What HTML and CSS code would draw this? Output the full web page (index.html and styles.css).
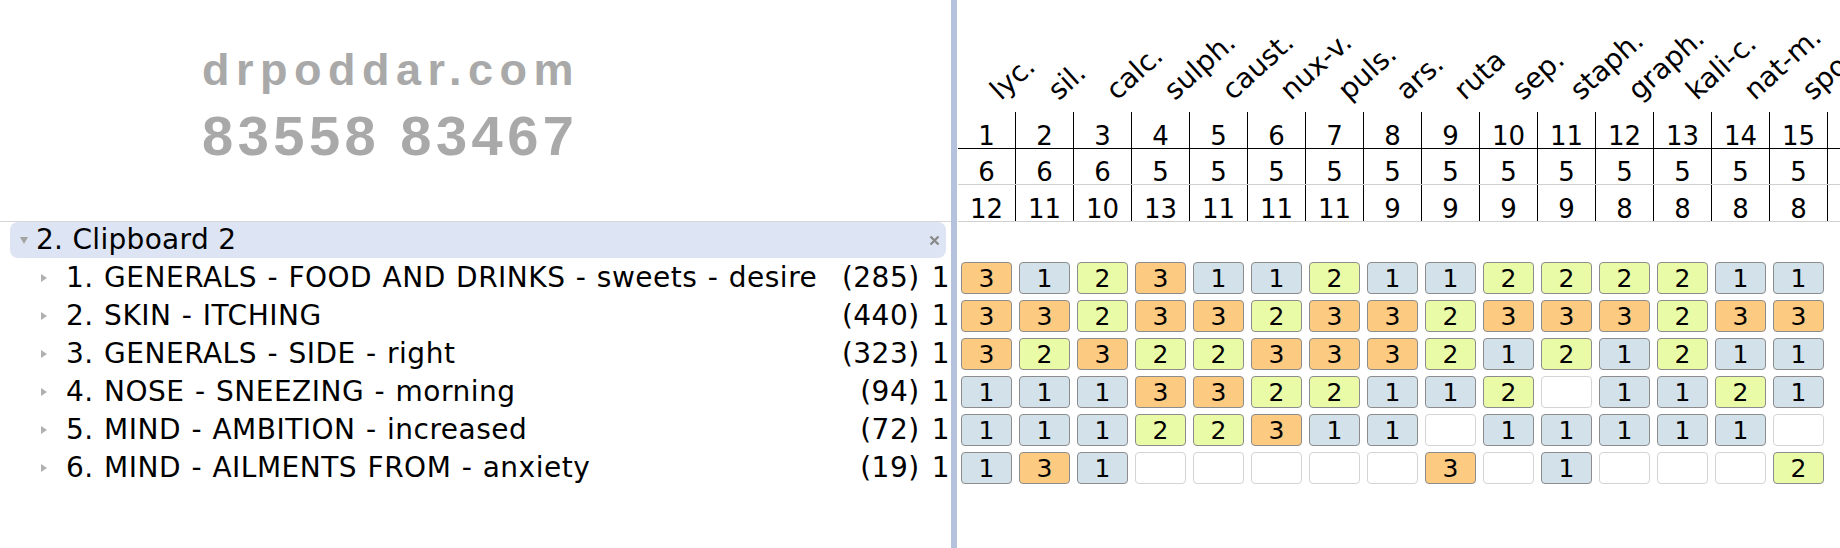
FILE: index.html
```html
<!DOCTYPE html>
<html>
<head>
  <meta charset="utf-8">
  <meta name="viewport" content="width=device-width">
  <title>Repertory Sheet</title>
  <link rel="stylesheet" href="styles.css">
</head>
<body>
  <div class="app">
    <div class="left">
      <div class="brand">
        <div class="brand-site">drpoddar.com</div>
        <div class="brand-phone">83558 83467</div>
      </div>
      <div class="tree">
        <div class="clip-head">
          <span class="tri-down"></span>
          <span class="clip-title">2. Clipboard 2</span>
          <svg class="close" width="11" height="11" viewBox="0 0 11 11">
            <path d="M1.5 1.5 L9.5 9.5 M9.5 1.5 L1.5 9.5" stroke="#8a8a8a" stroke-width="2.4" fill="none"/>
          </svg>
        </div>
        <ul class="rubrics">
          <li><span class="tri-right"></span><span class="rubric">1. GENERALS - FOOD AND DRINKS - sweets - desire</span><span class="hits">(285)</span><span class="wt">1</span></li>
          <li><span class="tri-right"></span><span class="rubric">2. SKIN - ITCHING</span><span class="hits">(440)</span><span class="wt">1</span></li>
          <li><span class="tri-right"></span><span class="rubric">3. GENERALS - SIDE - right</span><span class="hits">(323)</span><span class="wt">1</span></li>
          <li><span class="tri-right"></span><span class="rubric">4. NOSE - SNEEZING - morning</span><span class="hits">(94)</span><span class="wt">1</span></li>
          <li><span class="tri-right"></span><span class="rubric">5. MIND - AMBITION - increased</span><span class="hits">(72)</span><span class="wt">1</span></li>
          <li><span class="tri-right"></span><span class="rubric">6. MIND - AILMENTS FROM - anxiety</span><span class="hits">(19)</span><span class="wt">1</span></li>
        </ul>
      </div>
    </div>
    <div class="splitter"></div>
    <div class="right">
      <div class="remedies" id="remedies"></div>
      <div class="totals">
        <div class="tot-row rank" id="rank"></div>
        <div class="tot-row" id="symptoms"></div>
        <div class="tot-row" id="score"></div>
      </div>
      <div class="grid" id="grid"></div>
    </div>
  </div>

  <script>
  const remedies = ["lyc.", "sil.", "calc.", "sulph.", "caust.", "nux-v.", "puls.", "ars.", "ruta", "sep.", "staph.", "graph.", "kali-c.", "nat-m.", "spong."];
  const symptoms = [6, 6, 6, 5, 5, 5, 5, 5, 5, 5, 5, 5, 5, 5, 5];
  const scores = [12, 11, 10, 13, 11, 11, 11, 9, 9, 9, 9, 8, 8, 8, 8];
  // one string per rubric, "." = remedy not in rubric
  const grades = [
    "312311211222211",
    "332332332333233",
    "323223332121211",
    "1113322112.1121",
    "11122311.11111.",
    "131.....3.1...2"
  ];

  const remEl = document.getElementById("remedies");
  const rankEl = document.getElementById("rank");
  const symEl = document.getElementById("symptoms");
  const scoreEl = document.getElementById("score");
  const gridEl = document.getElementById("grid");

  remedies.forEach((name, i) => {
    remEl.innerHTML += `<div class="remedy"><span>${name}</span></div>`;
    rankEl.innerHTML += `<div>${i + 1}</div>`;
    symEl.innerHTML += `<div>${symptoms[i]}</div>`;
    scoreEl.innerHTML += `<div>${scores[i]}</div>`;
  });
  [rankEl, symEl, scoreEl].forEach(row => row.innerHTML += "<div></div>");

  grades.forEach(line => {
    let html = "";
    for (const g of line) {
      html += g === "." ? `<div class="cell empty"></div>` : `<div class="cell g${g}">${g}</div>`;
    }
    gridEl.innerHTML += `<div class="g-row">${html}</div>`;
  });
  </script>
</body>
</html>
```

FILE: styles.css
```css
*{
  box-sizing:border-box;
}
body{
  margin:0;
  background:#fff;
  color:#000;
  font-family:"DejaVu Sans", Verdana, sans-serif;
  overflow:hidden;
}
.app{
  display:flex;
  height:548px;
}
.left{
  width:951px;
  flex:none;
}
.brand{
  height:222px;
  border-bottom:1px solid #d6d6d6;
  padding:47px 0 0 202px;
  font-family:"Liberation Sans", Arial, sans-serif;
  font-weight:bold;
  color:#a9a9a9;
}
.brand-site{
  font-size:45px;
  line-height:45px;
  letter-spacing:6.5px;
}
.brand-phone{
  margin-top:16px;
  font-size:56px;
  line-height:56px;
  letter-spacing:4.5px;
}
.tree{
  padding:0 0 0 10px;
}
.clip-head{
  display:flex;
  align-items:center;
  height:36px;
  margin:0 5px 1px 0;
  background:#dde4f3;
  border-radius:8px;
  font-size:28px;
  line-height:36px;
  letter-spacing:0.3px;
}
.tri-down{
  margin-left:10px;
  border-left:4px solid transparent;
  border-right:4px solid transparent;
  border-top:7px solid #a3a3a3;
}
.clip-title{
  margin-left:8px;
}
.close{
  margin:0 6px 0 auto;
}
.rubrics{
  list-style:none;
  margin:0;
  padding:0;
}
.rubrics li{
  display:flex;
  align-items:center;
  height:38px;
  margin-right:1px;
  font-size:28px;
  line-height:38px;
  letter-spacing:0.5px;
  word-spacing:1px;
  white-space:nowrap;
}
.tri-right{
  margin-left:31px;
  border-top:4px solid transparent;
  border-bottom:4px solid transparent;
  border-left:6px solid #b0b0b0;
}
.rubric{
  flex:1;
  margin-left:19px;
}
.wt{
  margin-left:12px;
}
.splitter{
  width:6px;
  flex:none;
  background:#b5c1dd;
}
.right{
  flex:1;
  min-width:0;
  overflow:hidden;
  padding-left:1px;
}
.remedies{
  display:flex;
  height:112px;
}
.remedy{
  flex:0 0 58px;
  position:relative;
}
.remedy span{
  position:absolute;
  left:46px;
  bottom:7px;
  font-size:28px;
  line-height:28px;
  white-space:nowrap;
  transform:rotate(-42deg);
  transform-origin:0 100%;
}
.tot-row{
  display:flex;
  height:36px;
  border-bottom:1px solid #d0d0d0;
  font-size:26px;
  line-height:23px;
}
.tot-row.rank{
  height:37px;
  border-bottom-color:#000;
}
.tot-row:last-child{
  height:37px;
}
.tot-row div{
  flex:0 0 58px;
  display:flex;
  align-items:flex-end;
  justify-content:center;
  border-right:1px solid #000;
}
.grid{
  padding-top:37px;
}
.g-row{
  display:flex;
  height:38px;
}
.cell{
  flex:0 0 51px;
  height:32px;
  margin:3px 4px 0 3px;
  border:1px solid #8c8c8c;
  border-radius:4px;
  text-align:center;
  font-size:25px;
  line-height:31px;
}
.cell.g1{
  background:#d2e1ea;
}
.cell.g2{
  background:#e9fba7;
}
.cell.g3{
  background:#fcca80;
}
.cell.empty{
  border-color:#d4d4d4;
  background:#fff;
}
```
